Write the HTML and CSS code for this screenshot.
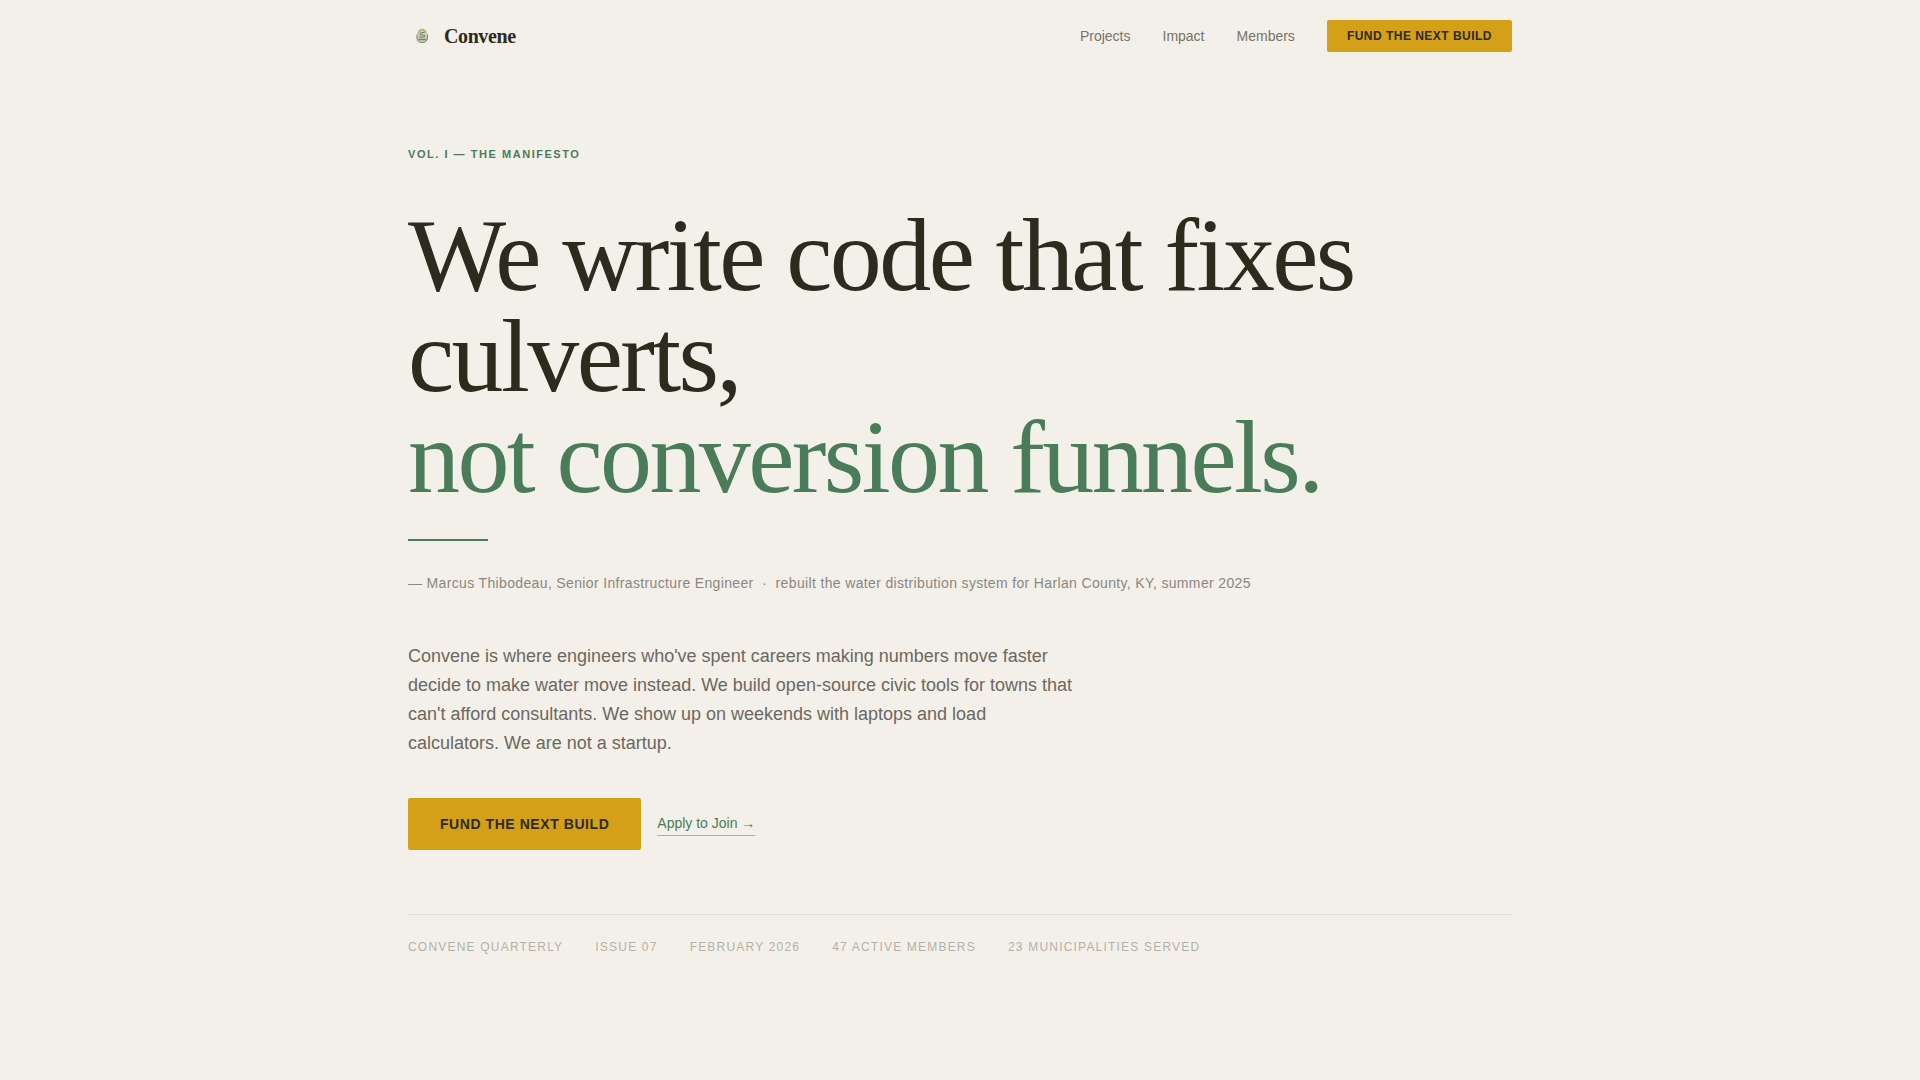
FILE: index.html
```html
<!DOCTYPE html>
<html lang="en">
<head>
<meta charset="utf-8">
<meta name="viewport" content="width=device-width, initial-scale=1">
<title>Convene</title>
<link rel="stylesheet" href="styles.css">
</head>
<body>
<header class="container site-header">
  <a class="brand" href="#">
    <svg class="brand-mark" viewBox="0 0 28 28" aria-hidden="true">
      <path d="M14 7C17 7 20 11 20 15.500C20 19 17.500 21 14 21C10.500 21 8.500 19 8.500 15.500C8.500 11 11 7 14 7Z" fill="#c9cfb8"/>
      <path d="M10 11.500C11 9 12.500 7.500 14 7.500C15.500 7.500 17 8.500 18 10.500" fill="none" stroke="#b9b268" stroke-width="1.500"/>
      <path d="M9 12.500V16.500C9.500 19.500 11.500 20.500 14 20.500C17 20.500 19.500 19 19.500 16V12.500" fill="none" stroke="#7d8a79" stroke-width="1"/>
      <path d="M16.500 10.500H13L12 12.500L16.500 13.500V15H11" fill="none" stroke="#71806a" stroke-width="1"/>
      <path d="M10.500 17.500H18" fill="none" stroke="#6f8a6c" stroke-width="1.500"/>
    </svg>
    <span>Convene</span>
  </a>
  <nav class="site-nav" aria-label="Main">
    <a class="nav-link" href="#">Projects</a>
    <a class="nav-link" href="#">Impact</a>
    <a class="nav-link" href="#">Members</a>
    <button class="button button-small" type="button">Fund the next build</button>
  </nav>
</header>
<main class="container hero">
  <p class="eyebrow">Vol. I — The Manifesto</p>
  <h1 class="headline">We write code that fixes culverts,<br><span class="headline-accent">not conversion funnels.</span></h1>
  <hr class="rule">
  <p class="byline">— Marcus Thibodeau, Senior Infrastructure Engineer &nbsp;·&nbsp; rebuilt the water distribution system for Harlan County, KY, summer 2025</p>
  <p class="intro">Convene is where engineers who've spent careers making numbers move faster decide to make water move instead. We build open-source civic tools for towns that can't afford consultants. We show up on weekends with laptops and load calculators. We are not a startup.</p>
  <div class="actions">
    <button class="button button-large" type="button">Fund the next build</button>
    <a class="join-link" href="#">Apply to Join →</a>
  </div>
  <ul class="masthead">
    <li>Convene Quarterly</li>
    <li>Issue 07</li>
    <li>February 2026</li>
    <li>47 Active Members</li>
    <li>23 Municipalities Served</li>
  </ul>
</main>
</body>
</html>
```
FILE: styles.css
```css
* {
  box-sizing: border-box;
}

body {
  margin: 0;
  background: #f3f0e9;
  color: #2d2a1e;
  font-family: "Liberation Sans", Arial, sans-serif;
}

.container {
  width: 100%;
  max-width: 1200px;
  margin: 0 auto;
  padding: 0 48px;
}

.site-header {
  display: flex;
  align-items: center;
  justify-content: space-between;
  padding-top: 20px;
  padding-bottom: 20px;
}

.brand {
  display: flex;
  align-items: center;
  gap: 8px;
  color: #2d2a1e;
  font: bold 20px/24px "Liberation Serif", "Times New Roman", serif;
  letter-spacing: -0.02em;
  text-decoration: none;
}

.brand-mark {
  width: 28px;
  height: 28px;
}

.site-nav {
  display: flex;
  flex-wrap: wrap;
  align-items: center;
  gap: 32px;
}

.nav-link {
  color: #767369;
  font-size: 14px;
  line-height: 20px;
  text-decoration: none;
}

.button {
  border: 0;
  border-radius: 2px;
  background: #d4a017;
  color: #2d2a1e;
  font-family: inherit;
  font-weight: bold;
  text-transform: uppercase;
  cursor: pointer;
}

.button-small {
  padding: 8px 20px;
  font-size: 12px;
  line-height: 16px;
  letter-spacing: 0.04em;
}

.button-large {
  padding: 16px 32px;
  font-size: 14px;
  line-height: 20px;
  letter-spacing: 0.04em;
}

.hero {
  padding-top: 72px;
  padding-bottom: 80px;
}

.eyebrow {
  margin: 0 0 40px;
  color: #4a7c59;
  font-size: 11px;
  font-weight: bold;
  line-height: 20px;
  letter-spacing: 0.14em;
  text-transform: uppercase;
}

.headline {
  margin: 0;
  font: 400 104px/101px "Liberation Serif", "Times New Roman", serif;
  letter-spacing: -0.025em;
}

.headline-accent {
  color: #4a7c59;
}

.rule {
  width: 80px;
  height: 2px;
  margin: 32px 0;
  border: 0;
  background: #4a7c59;
}

.byline {
  margin: 0 0 48px;
  color: #8a877e;
  font-size: 14px;
  line-height: 21px;
  letter-spacing: 0.025em;
}

.intro {
  max-width: 672px;
  margin: 0 0 40px;
  color: #6b6860;
  font-size: 18px;
  line-height: 29px;
}

.actions {
  display: flex;
  flex-wrap: wrap;
  align-items: center;
  gap: 16px;
}

.join-link {
  padding-bottom: 2px;
  border-bottom: 1px solid #a3b8a4;
  color: #4a7c59;
  font-size: 14px;
  line-height: 20px;
  text-decoration: none;
}

.masthead {
  display: flex;
  flex-wrap: wrap;
  gap: 8px 32px;
  margin: 64px 0 0;
  padding: 24px 0 0;
  border-top: 1px solid #e0ddd5;
  color: #b3b0a8;
  font-size: 12px;
  line-height: 16px;
  letter-spacing: 0.1em;
  list-style: none;
  text-transform: uppercase;
}
```
